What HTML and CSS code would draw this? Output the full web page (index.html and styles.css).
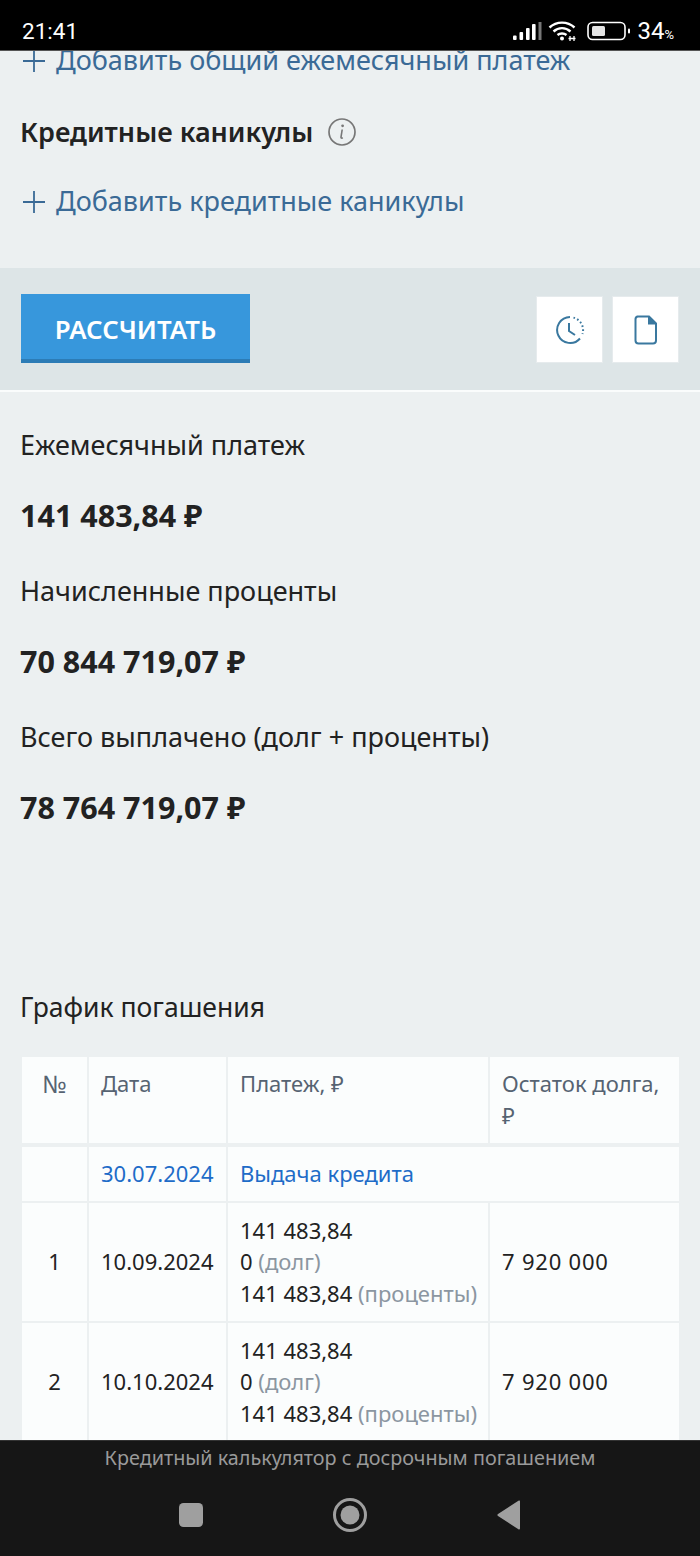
FILE: index.html
```html
<!DOCTYPE html>
<html lang="ru">
<head>
<meta charset="utf-8">
<title>Кредитный калькулятор</title>
<link rel="stylesheet" href="styles.css">
</head>
<body>
<div class="phone">
  <header class="status">
    <span class="clock">21:41</span>
    <div class="status-right">
      <svg class="signal" width="30" height="20" viewBox="0 0 30 20"><g fill="#fff"><rect x="1" y="14.500" width="3.600" height="4.500" rx="1"/><rect x="7.500" y="11" width="3.600" height="8" rx="1"/><rect x="14" y="7" width="3.600" height="12" rx="1"/><rect x="20" y="3" width="3.600" height="16" rx="1"/></g><rect x="26.500" y="1" width="3" height="18" fill="#777"/></svg>
      <svg class="wifi" width="30" height="22" viewBox="0 0 30 22" fill="none" stroke="#fff" stroke-width="2.400"><path d="M1.500 7.500C8.500 1 19.500 1 26.500 7.500"/><path d="M5.500 11.500C10.500 7 17.500 7 22.500 11.500"/><path d="M9.500 15C12 13 16 13 18.500 15"/><circle cx="14" cy="18.600" r="2" fill="#fff" stroke="none"/><path d="M22 21v-5M26 21v-5M20.500 18.500h7" stroke-width="1.300"/></svg>
      <svg class="battery" width="44" height="20" viewBox="0 0 44 20" fill="none"><rect x="1" y="1.500" width="37" height="17" rx="4.500" stroke="#fff" stroke-width="1.600"/><rect x="5" y="5" width="13" height="10" rx="1.500" fill="#e4e4e4"/><rect x="41" y="7.500" width="2" height="5" rx="1" fill="#fff"/></svg>
      <span class="level">34<small>%</small></span>
    </div>
  </header>

  <main class="content">
    <a class="add add-top"><svg class="plus" width="22" height="22" viewBox="0 0 22 22"><path d="M11 0v22M0 11h22" stroke="#3a6a96" stroke-width="1.800"/></svg>Добавить общий ежемесячный платеж</a>
    <h2 class="section-title">Кредитные каникулы
      <svg class="info" width="30" height="30" viewBox="0 0 30 30" fill="none"><circle cx="15" cy="15" r="13" stroke="#777" stroke-width="1.700"/><circle cx="15.600" cy="8.800" r="1.400" fill="#777"/><path d="M15.200 12.500l-1.200 7.600c-.1 1 .6 1.300 1.800.6" stroke="#777" stroke-width="1.600"/></svg>
    </h2>
    <a class="add add-second"><svg class="plus" width="22" height="22" viewBox="0 0 22 22"><path d="M11 0v22M0 11h22" stroke="#3a6a96" stroke-width="1.800"/></svg>Добавить кредитные каникулы</a>

    <section class="actions">
      <button class="primary">РАССЧИТАТЬ</button>
      <div class="tools">
        <button class="tool">
          <svg width="30" height="30" viewBox="0 0 30 30" fill="none" stroke="#3a789f" stroke-width="2"><path d="M15 2A13 13 0 1 0 25 23.500"/><path d="M14 8v8l6 4"/><path d="M18.500 2.600 A13 13 0 0 1 27.500 19" stroke-dasharray="1.600 2.400"/></svg>
        </button>
        <button class="tool">
          <svg width="24" height="30" viewBox="0 0 24 30" fill="none"><path d="M3.500 1.500H15L22 8.500V25.500a3 3 0 0 1-3 3H4.500a3 3 0 0 1-3-3V4.500a3 3 0 0 1 2-3z" stroke="#3a789f" stroke-width="2"/><path d="M14 1l9 8.500h-9z" fill="#3a789f"/></svg>
        </button>
      </div>
    </section>

    <section class="results">
      <div class="label">Ежемесячный платеж</div>
      <div class="value">141 483,84 ₽</div>
      <div class="label">Начисленные проценты</div>
      <div class="value">70 844 719,07 ₽</div>
      <div class="label">Всего выплачено (долг + проценты)</div>
      <div class="value">78 764 719,07 ₽</div>
    </section>

    <h3 class="schedule-title">График погашения</h3>

    <table class="schedule">
      <colgroup><col class="c1"><col class="c2"><col class="c3"><col class="c4"></colgroup>
      <thead>
        <tr><th class="num">№</th><th>Дата</th><th>Платеж, ₽</th><th>Остаток долга, ₽</th></tr>
      </thead>
      <tbody>
        <tr class="issue"><td></td><td class="link">30.07.2024</td><td class="link" colspan="2">Выдача кредита</td></tr>
        <tr class="pay"><td class="num">1</td><td>10.09.2024</td><td>141 483,84<br>0 <span class="muted">(долг)</span><br>141 483,84 <span class="muted">(проценты)</span></td><td class="balance">7 920 000</td></tr>
        <tr class="pay"><td class="num">2</td><td>10.10.2024</td><td>141 483,84<br>0 <span class="muted">(долг)</span><br>141 483,84 <span class="muted">(проценты)</span></td><td class="balance">7 920 000</td></tr>
      </tbody>
    </table>
  </main>

  <footer class="navbar">
    <div class="page-name">Кредитный калькулятор с досрочным погашением</div>
    <div class="nav-buttons">
      <svg width="26" height="26" viewBox="0 0 26 26"><rect x="1" y="1" width="24" height="24" rx="4.500" fill="#9f9f9f"/></svg>
      <svg width="36" height="36" viewBox="0 0 36 36" fill="none"><circle cx="18" cy="18" r="15.500" stroke="#9f9f9f" stroke-width="3"/><circle cx="18" cy="18" r="9.500" fill="#9f9f9f"/></svg>
      <svg width="26" height="30" viewBox="0 0 26 30"><path d="M24 1.500V28.500a1 1 0 0 1-1.600.8L2 16a1.300 1.300 0 0 1 0-2L22.400.7A1 1 0 0 1 24 1.500z" fill="#9f9f9f"/></svg>
    </div>
  </footer>
</div>
</body>
</html>
```

FILE: styles.css
```css
* { box-sizing: border-box; }
html, body { margin: 0; padding: 0; height: 100%; }
body { font-family: "Noto Sans", "Open Sans", sans-serif; background: #ecf0f1; overflow: hidden; }
.phone { width: 700px; height: 1556px; display: flex; flex-direction: column; overflow: hidden; }

.status { height: 51px; flex: none; background: #000; color: #fff; display: flex; align-items: center; justify-content: space-between; padding: 12px 26px 0 22px; border-bottom: 1px solid #555; }
.clock { font-size: 22.500px; line-height: 1; font-family: "Roboto", sans-serif; }
.status-right { display: flex; align-items: center; gap: 6px; }
.wifi { margin-right: 3px; }
.level { font-size: 24px; font-family: "Roboto", sans-serif; line-height: 1; }
.level small { font-size: 13px; }

.content { flex: 1; min-height: 0; overflow: hidden; background: #ecf0f1; }

.add { display: flex; align-items: center; font-size: 27px; line-height: 36px; color: #3a6a96; padding-left: 23px; }
.plus { flex: none; margin-right: 11px; margin-top: 2px; }
.add-top { margin-top: -9px; }
.add-second { margin-top: 33px; }
.section-title { display: flex; align-items: center; gap: 14px; margin: 36px 0 0; padding-left: 20px; font-size: 27px; line-height: 36px; font-weight: 600; color: #222; }

.actions { margin-top: 49px; height: 124px; background: #dde5e7; border-bottom: 2px solid #fafcfc; padding: 26px 21px 0; display: flex; justify-content: space-between; align-items: flex-start; }
.primary { width: 229px; height: 69px; border: 0; border-bottom: 4px solid #2c7cb6; background: #3797dc; color: #fff; font: 600 25.800px "Noto Sans", sans-serif; padding: 5px 0 0; }
.tools { display: flex; gap: 9px; margin-top: 2px; }
.tool { width: 67px; height: 67px; background: #fff; border: 1px solid #e6ebed; display: flex; align-items: center; justify-content: center; padding: 0; }

.results { padding: 35px 20px 0; }
.label { font-size: 27px; line-height: 36px; color: #222; }
.value { font-size: 30.500px; line-height: 44px; font-weight: 700; color: #222; margin: 30px 0 36px; }

.schedule-title { margin: 160px 0 0; padding-left: 20px; font-size: 26.500px; line-height: 36px; font-weight: 400; color: #222; }

.schedule { margin: 32px 0 0 22px; width: 657px; table-layout: fixed; border-collapse: collapse; font-size: 22px; line-height: 31.500px; color: #222; }
.c1 { width: 66px; } .c2 { width: 139px; } .c3 { width: 262px; } .c4 { width: 190px; }
.schedule th, .schedule td { background: #fbfdfd; border-right: 2px solid #ecf0f1; border-bottom: 2px solid #ecf0f1; padding: 0 0 0 12px; text-align: left; font-weight: 400; white-space: nowrap; }
.schedule th:last-child, .schedule td:last-child { border-right: 0; }
.schedule th { color: #566372; vertical-align: top; padding: 11px 12px 12px 12px; border-bottom-width: 4px; white-space: normal; }
.schedule .num { text-align: center; padding: 0; }
.schedule th.num { padding-top: 11px; font-size: 24px; }
.issue td { height: 57px; }
.pay td { height: 120px; }
.balance { letter-spacing: .8px; }
.link { color: #1e6cc8 !important; }
.muted { color: #8b96a1; }

.navbar { height: 116px; flex: none; background: #161616; border-top: 1px solid #333; }
.page-name { text-align: center; font-size: 19.800px; line-height: 34px; color: #9a9a9a; }
.nav-buttons { display: flex; align-items: center; justify-content: center; padding: 22px 0 0; }
.nav-buttons svg:nth-child(1) { margin-right: 128px; }
.nav-buttons svg:nth-child(3) { margin-left: 128px; }
```
